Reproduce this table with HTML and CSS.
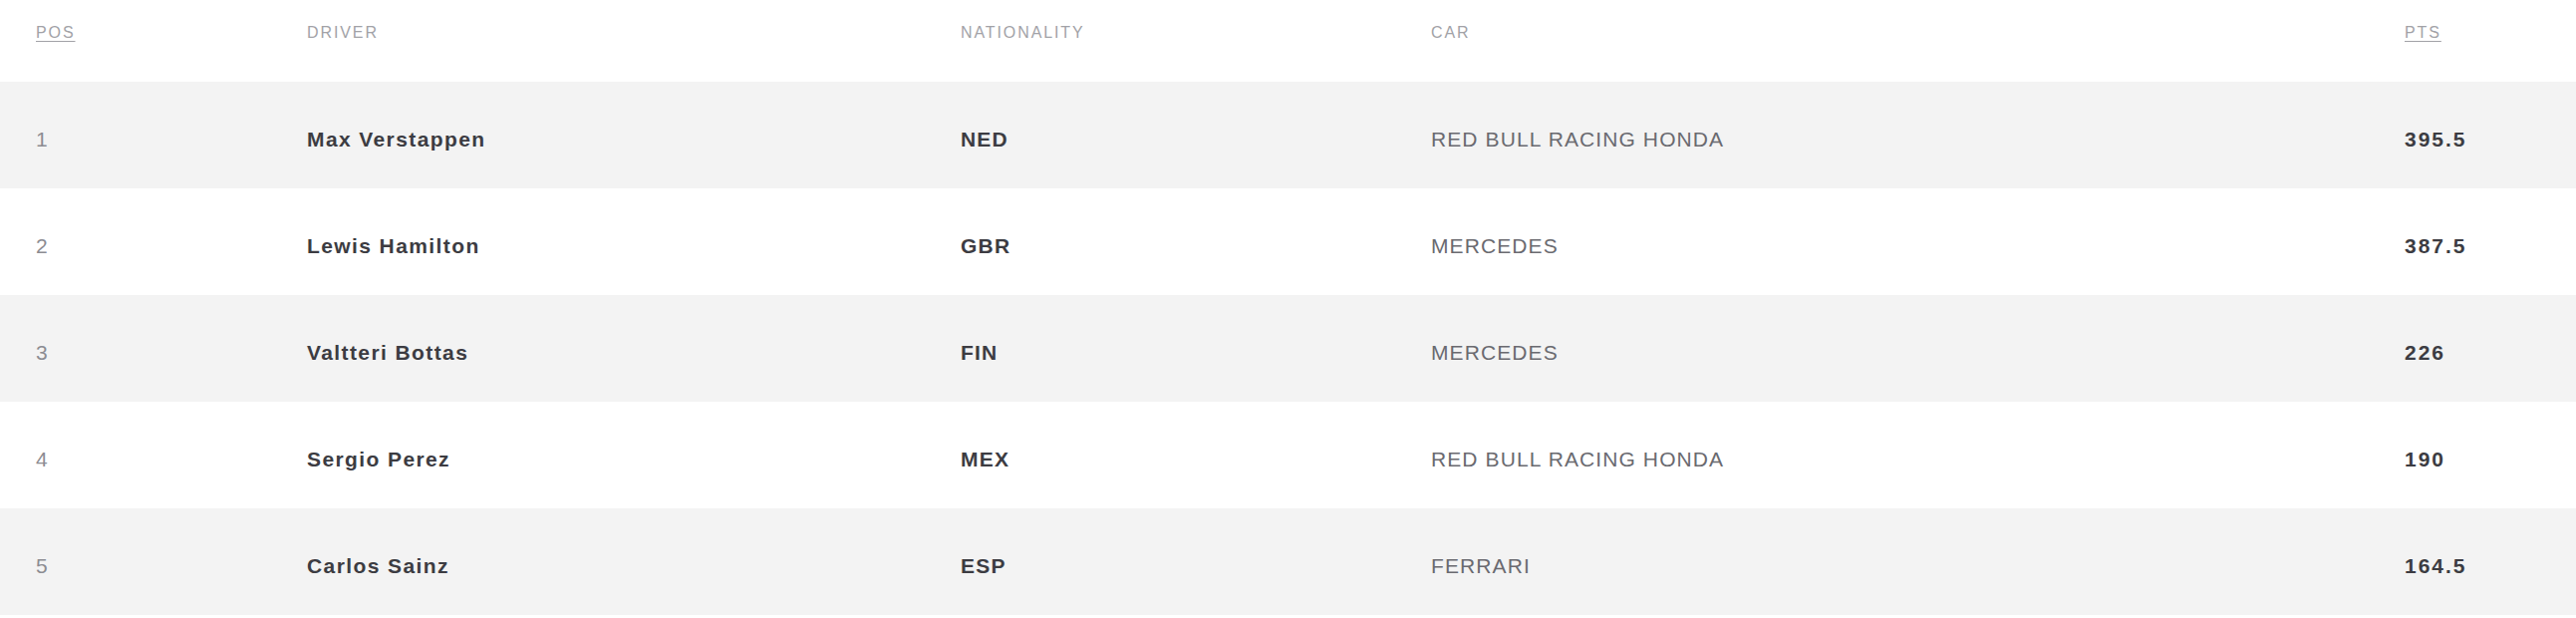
FILE: index.html
```html
<!DOCTYPE html>
<html lang="en">
<head>
<meta charset="utf-8">
<title>Driver Standings</title>
<link rel="stylesheet" href="styles.css">
</head>
<body>
<div class="standings">
  <div class="row head">
    <div class="cell"><abbr class="abbr">POS</abbr></div>
    <div class="cell">DRIVER</div>
    <div class="cell">NATIONALITY</div>
    <div class="cell">CAR</div>
    <div class="cell"><abbr class="abbr">PTS</abbr></div>
  </div>
  <div class="row alt">
    <div class="cell pos">1</div>
    <div class="cell name">Max Verstappen</div>
    <div class="cell nat">NED</div>
    <div class="cell car">RED BULL RACING HONDA</div>
    <div class="cell pts">395.5</div>
  </div>
  <div class="row">
    <div class="cell pos">2</div>
    <div class="cell name">Lewis Hamilton</div>
    <div class="cell nat">GBR</div>
    <div class="cell car">MERCEDES</div>
    <div class="cell pts">387.5</div>
  </div>
  <div class="row alt">
    <div class="cell pos">3</div>
    <div class="cell name">Valtteri Bottas</div>
    <div class="cell nat">FIN</div>
    <div class="cell car">MERCEDES</div>
    <div class="cell pts">226</div>
  </div>
  <div class="row">
    <div class="cell pos">4</div>
    <div class="cell name">Sergio Perez</div>
    <div class="cell nat">MEX</div>
    <div class="cell car">RED BULL RACING HONDA</div>
    <div class="cell pts">190</div>
  </div>
  <div class="row alt">
    <div class="cell pos">5</div>
    <div class="cell name">Carlos Sainz</div>
    <div class="cell nat">ESP</div>
    <div class="cell car">FERRARI</div>
    <div class="cell pts">164.5</div>
  </div>
</div>
</body>
</html>
```
FILE: styles.css
```css
html, body {
  margin: 0;
  padding: 0;
  background: #ffffff;
}

body {
  font-family: "Liberation Sans", Arial, sans-serif;
  color: #3a3a40;
}

.standings {
  width: 100%;
}

.row {
  display: grid;
  grid-template-columns: 272px 656px 472px 977px 1fr;
  padding-left: 36px;
  padding-top: 8px;
  box-sizing: border-box;
  height: 107px;
  align-items: center;
}

.row.alt {
  background: #f3f3f3;
}

.row.head {
  height: 82px;
  align-items: start;
  padding-top: 24px;
  font-size: 16px;
  letter-spacing: 1.9px;
  color: #a2a2a7;
}

.abbr {
  text-decoration: underline;
  text-underline-offset: 3px;
}

.cell {
  white-space: nowrap;
}

.pos {
  font-size: 21px;
  color: #8c8c92;
}

.name {
  font-size: 21px;
  font-weight: bold;
  letter-spacing: 1.4px;
  color: #3c3c42;
}

.nat {
  font-size: 21px;
  font-weight: bold;
  letter-spacing: 1.2px;
  color: #3c3c42;
}

.car {
  font-size: 21px;
  letter-spacing: 1.1px;
  color: #6a6a70;
}

.pts {
  font-size: 21px;
  font-weight: bold;
  letter-spacing: 2px;
  color: #3c3c42;
}
```
